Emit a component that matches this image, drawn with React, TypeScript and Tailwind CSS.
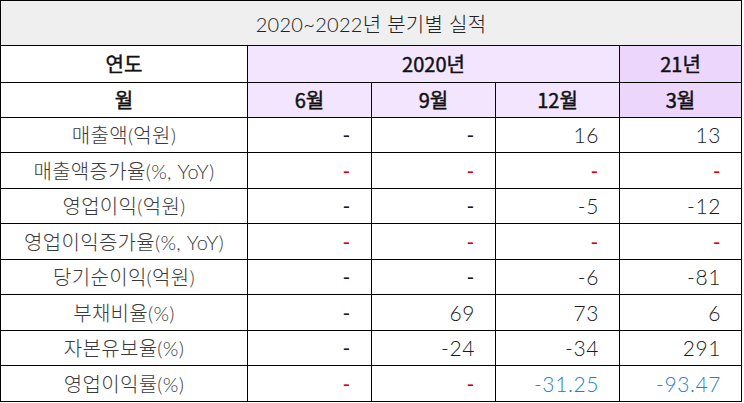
const font = { fontFamily: '"Noto Sans CJK KR", "Noto Sans", sans-serif' }

type Cell = { v: string; tone?: "red" | "blue" }

type Row = { label: string; cells: Cell[]; h: string }

const dashes = (): Cell[] => [
  { v: "-", tone: "red" },
  { v: "-", tone: "red" },
  { v: "-", tone: "red" },
  { v: "-", tone: "red" },
]

const rows: Row[] = [
  { label: "매출액(억원)", h: "h-[35px]", cells: [{ v: "-" }, { v: "-" }, { v: "16" }, { v: "13" }] },
  { label: "매출액증가율(%, YoY)", h: "h-[36px]", cells: dashes() },
  { label: "영업이익(억원)", h: "h-[35px]", cells: [{ v: "-" }, { v: "-" }, { v: "-5" }, { v: "-12" }] },
  { label: "영업이익증가율(%, YoY)", h: "h-[36px]", cells: dashes() },
  { label: "당기순이익(억원)", h: "h-[35px]", cells: [{ v: "-" }, { v: "-" }, { v: "-6" }, { v: "-81" }] },
  { label: "부채비율(%)", h: "h-[36px]", cells: [{ v: "-" }, { v: "69" }, { v: "73" }, { v: "6" }] },
  { label: "자본유보율(%)", h: "h-[35px]", cells: [{ v: "-" }, { v: "-24" }, { v: "-34" }, { v: "291" }] },
  {
    label: "영업이익률(%)",
    h: "h-[36px]",
    cells: [
      { v: "-", tone: "red" },
      { v: "-", tone: "red" },
      { v: "-31.25", tone: "blue" },
      { v: "-93.47", tone: "blue" },
    ],
  },
]

function toneClass(tone?: "red" | "blue") {
  if (tone === "red") return "text-[#e00000]"
  if (tone === "blue") return "text-[#1f80cc]"
  return "text-[#1a1a1a]"
}

const head = "border border-black text-center text-[20px] font-normal text-[#111] [-webkit-text-stroke:0.45px_#111]"

export default function App() {
  return (
    <div className="h-[403px] w-[744px] bg-white" style={font}>
      <table className="w-[741px] table-fixed border-collapse">
        <colgroup>
          <col className="w-[247px]" />
          <col className="w-[124px]" />
          <col className="w-[124px]" />
          <col className="w-[124px]" />
          <col className="w-[122px]" />
        </colgroup>
        <tbody>
          <tr className="h-[45px]">
            <td
              colSpan={5}
              className="border border-black bg-[#efefef] pt-[2px] text-center font-['Lato','Noto_Sans_CJK_KR',sans-serif] text-[20px] font-light tracking-[0.3px] text-[#222]"
            >
              2020~2022년 분기별 실적
            </td>
          </tr>
          <tr className="h-[37px]">
            <td className={head}>연도</td>
            <td colSpan={3} className={`${head} bg-[#f3e5fd]`}>
              2020년
            </td>
            <td className={`${head} bg-[#edd6fc]`}>21년</td>
          </tr>
          <tr className="h-[35px]">
            <td className={head}>월</td>
            <td className={`${head} bg-[#f3e5fd]`}>6월</td>
            <td className={`${head} bg-[#f3e5fd]`}>9월</td>
            <td className={`${head} bg-[#f3e5fd]`}>12월</td>
            <td className={`${head} bg-[#edd6fc]`}>3월</td>
          </tr>
          {rows.map((row) => (
            <tr key={row.label} className={row.h}>
              <td className="border border-black text-center font-['Lato','Noto_Sans_CJK_KR',sans-serif] text-[20px] font-light tracking-[0.3px] text-[#3a3a3a]">
                {row.label}
              </td>
              {row.cells.map((c, i) => (
                <td
                  key={i}
                  className={`border border-black pr-[20px] text-right font-['Lato','Noto_Sans_CJK_KR',sans-serif] text-[21px] tracking-[0.6px] ${
                    c.v === "-" ? "font-normal" : "font-light"
                  } ${toneClass(c.tone)}`}
                >
                  {c.v}
                </td>
              ))}
            </tr>
          ))}
        </tbody>
      </table>
    </div>
  )
}
